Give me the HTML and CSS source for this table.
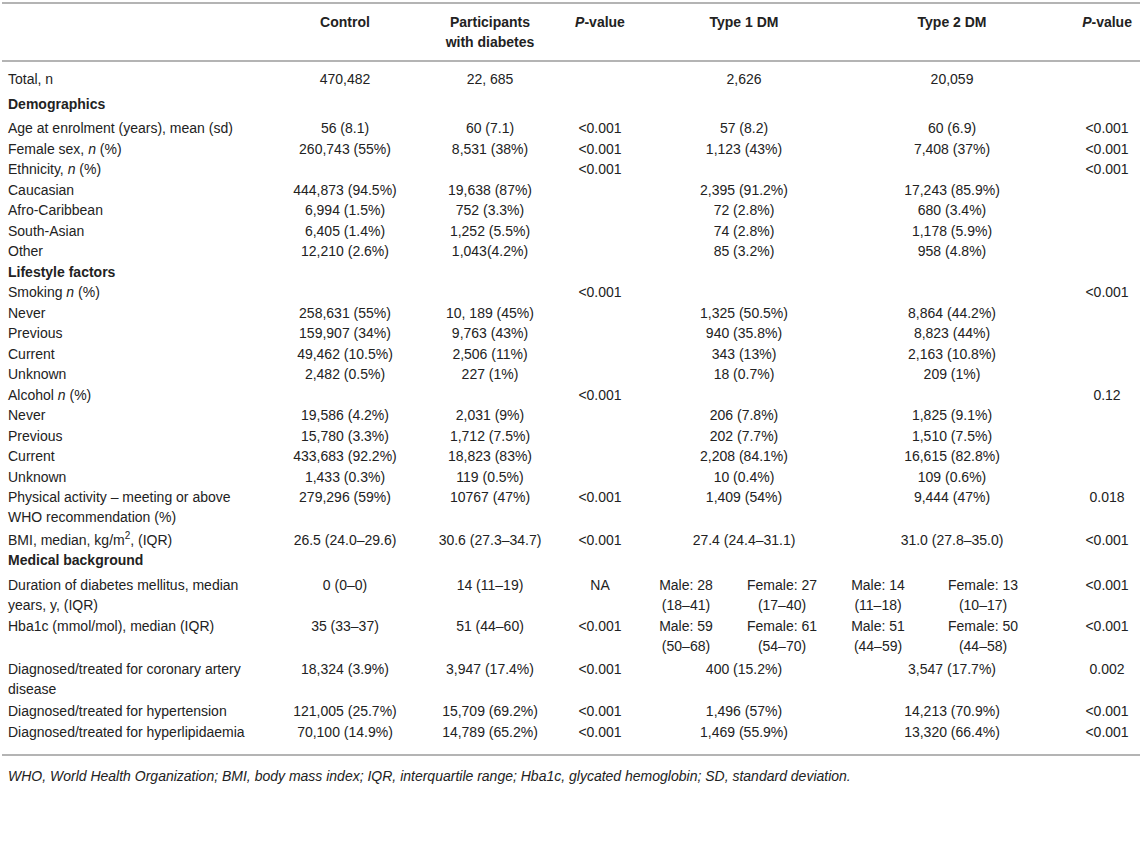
FILE: index.html
```html
<!DOCTYPE html>
<html>
<head>
<meta charset="utf-8">
<link rel="stylesheet" href="styles.css">
</head>
<body>
<div class="wrap">
<table class="tbl">
<colgroup>
<col class="c-label"><col class="c-ctrl"><col class="c-part"><col class="c-p"><col class="c-t1a"><col class="c-t1b"><col class="c-t2a"><col class="c-t2b"><col class="c-p2">
</colgroup>
<thead>
<tr>
<th class="lab"></th>
<th>Control</th>
<th>Participants<br>with diabetes</th>
<th><i>P</i>-value</th>
<th colspan="2" class="t1">Type 1 DM</th>
<th colspan="2" class="t2">Type 2 DM</th>
<th class="p2"><i>P</i>-value</th>
</tr>
</thead>
<tbody>
<tr class="first"><td class="lab">Total, n</td><td>470,482</td><td>22, 685</td><td></td><td colspan="2" class="t1">2,626</td><td colspan="2" class="t2">20,059</td><td class="p2"></td></tr>
<tr class="demo"><td class="lab sec" colspan="9">Demographics</td></tr>
<tr><td class="lab">Age at enrolment (years), mean (sd)</td><td>56 (8.1)</td><td>60 (7.1)</td><td>&lt;0.001</td><td colspan="2" class="t1">57 (8.2)</td><td colspan="2" class="t2">60 (6.9)</td><td class="p2">&lt;0.001</td></tr>
<tr><td class="lab">Female sex, <i>n</i> (%)</td><td>260,743 (55%)</td><td>8,531 (38%)</td><td>&lt;0.001</td><td colspan="2" class="t1">1,123 (43%)</td><td colspan="2" class="t2">7,408 (37%)</td><td class="p2">&lt;0.001</td></tr>
<tr><td class="lab">Ethnicity, <i>n</i> (%)</td><td></td><td></td><td>&lt;0.001</td><td colspan="2" class="t1"></td><td colspan="2" class="t2"></td><td class="p2">&lt;0.001</td></tr>
<tr><td class="lab">Caucasian</td><td>444,873 (94.5%)</td><td>19,638 (87%)</td><td></td><td colspan="2" class="t1">2,395 (91.2%)</td><td colspan="2" class="t2">17,243 (85.9%)</td><td class="p2"></td></tr>
<tr><td class="lab">Afro-Caribbean</td><td>6,994 (1.5%)</td><td>752 (3.3%)</td><td></td><td colspan="2" class="t1">72 (2.8%)</td><td colspan="2" class="t2">680 (3.4%)</td><td class="p2"></td></tr>
<tr><td class="lab">South-Asian</td><td>6,405 (1.4%)</td><td>1,252 (5.5%)</td><td></td><td colspan="2" class="t1">74 (2.8%)</td><td colspan="2" class="t2">1,178 (5.9%)</td><td class="p2"></td></tr>
<tr><td class="lab">Other</td><td>12,210 (2.6%)</td><td>1,043(4.2%)</td><td></td><td colspan="2" class="t1">85 (3.2%)</td><td colspan="2" class="t2">958 (4.8%)</td><td class="p2"></td></tr>
<tr><td class="lab sec" colspan="9">Lifestyle factors</td></tr>
<tr><td class="lab">Smoking <i>n</i> (%)</td><td></td><td></td><td>&lt;0.001</td><td colspan="2" class="t1"></td><td colspan="2" class="t2"></td><td class="p2">&lt;0.001</td></tr>
<tr><td class="lab">Never</td><td>258,631 (55%)</td><td>10, 189 (45%)</td><td></td><td colspan="2" class="t1">1,325 (50.5%)</td><td colspan="2" class="t2">8,864 (44.2%)</td><td class="p2"></td></tr>
<tr><td class="lab">Previous</td><td>159,907 (34%)</td><td>9,763 (43%)</td><td></td><td colspan="2" class="t1">940 (35.8%)</td><td colspan="2" class="t2">8,823 (44%)</td><td class="p2"></td></tr>
<tr><td class="lab">Current</td><td>49,462 (10.5%)</td><td>2,506 (11%)</td><td></td><td colspan="2" class="t1">343 (13%)</td><td colspan="2" class="t2">2,163 (10.8%)</td><td class="p2"></td></tr>
<tr><td class="lab">Unknown</td><td>2,482 (0.5%)</td><td>227 (1%)</td><td></td><td colspan="2" class="t1">18 (0.7%)</td><td colspan="2" class="t2">209 (1%)</td><td class="p2"></td></tr>
<tr><td class="lab">Alcohol <i>n</i> (%)</td><td></td><td></td><td>&lt;0.001</td><td colspan="2" class="t1"></td><td colspan="2" class="t2"></td><td class="p2">0.12</td></tr>
<tr><td class="lab">Never</td><td>19,586 (4.2%)</td><td>2,031 (9%)</td><td></td><td colspan="2" class="t1">206 (7.8%)</td><td colspan="2" class="t2">1,825 (9.1%)</td><td class="p2"></td></tr>
<tr><td class="lab">Previous</td><td>15,780 (3.3%)</td><td>1,712 (7.5%)</td><td></td><td colspan="2" class="t1">202 (7.7%)</td><td colspan="2" class="t2">1,510 (7.5%)</td><td class="p2"></td></tr>
<tr><td class="lab">Current</td><td>433,683 (92.2%)</td><td>18,823 (83%)</td><td></td><td colspan="2" class="t1">2,208 (84.1%)</td><td colspan="2" class="t2">16,615 (82.8%)</td><td class="p2"></td></tr>
<tr><td class="lab">Unknown</td><td>1,433 (0.3%)</td><td>119 (0.5%)</td><td></td><td colspan="2" class="t1">10 (0.4%)</td><td colspan="2" class="t2">109 (0.6%)</td><td class="p2"></td></tr>
<tr class="two"><td class="lab">Physical activity – meeting or above WHO recommendation (%)</td><td>279,296 (59%)</td><td>10767 (47%)</td><td>&lt;0.001</td><td colspan="2" class="t1">1,409 (54%)</td><td colspan="2" class="t2">9,444 (47%)</td><td class="p2">0.018</td></tr>
<tr><td class="lab">BMI, median, kg/m<sup>2</sup>, (IQR)</td><td>26.5 (24.0–29.6)</td><td>30.6 (27.3–34.7)</td><td>&lt;0.001</td><td colspan="2" class="t1">27.4 (24.4–31.1)</td><td colspan="2" class="t2">31.0 (27.8–35.0)</td><td class="p2">&lt;0.001</td></tr>
<tr class="medsec"><td class="lab sec" colspan="9">Medical background</td></tr>
<tr class="dur"><td class="lab">Duration of diabetes mellitus, median years, y, (IQR)</td><td>0 (0–0)</td><td>14 (11–19)</td><td>NA</td><td>Male: 28<br>(18–41)</td><td>Female: 27<br>(17–40)</td><td>Male: 14<br>(11–18)</td><td>Female: 13<br>(10–17)</td><td class="p2">&lt;0.001</td></tr>
<tr class="two"><td class="lab">Hba1c (mmol/mol), median (IQR)</td><td>35 (33–37)</td><td>51 (44–60)</td><td>&lt;0.001</td><td>Male: 59<br>(50–68)</td><td>Female: 61<br>(54–70)</td><td>Male: 51<br>(44–59)</td><td>Female: 50<br>(44–58)</td><td class="p2">&lt;0.001</td></tr>
<tr class="two"><td class="lab">Diagnosed/treated for coronary artery disease</td><td>18,324 (3.9%)</td><td>3,947 (17.4%)</td><td>&lt;0.001</td><td colspan="2" class="t1">400 (15.2%)</td><td colspan="2" class="t2">3,547 (17.7%)</td><td class="p2">0.002</td></tr>
<tr><td class="lab">Diagnosed/treated for hypertension</td><td>121,005 (25.7%)</td><td>15,709 (69.2%)</td><td>&lt;0.001</td><td colspan="2" class="t1">1,496 (57%)</td><td colspan="2" class="t2">14,213 (70.9%)</td><td class="p2">&lt;0.001</td></tr>
<tr class="last"><td class="lab">Diagnosed/treated for hyperlipidaemia</td><td>70,100 (14.9%)</td><td>14,789 (65.2%)</td><td>&lt;0.001</td><td colspan="2" class="t1">1,469 (55.9%)</td><td colspan="2" class="t2">13,320 (66.4%)</td><td class="p2">&lt;0.001</td></tr>
</tbody>
</table>
<p class="note">WHO, World Health Organization; BMI, body mass index; IQR, interquartile range; Hba1c, glycated hemoglobin; SD, standard deviation.</p>
</div>
</body>
</html>
```
FILE: styles.css
```css
html, body {
  margin: 0;
  padding: 0;
  background: #ffffff;
}
body {
  font-family: "Liberation Sans", Arial, sans-serif;
  color: #222222;
  font-size: 14px;
}
.wrap {
  padding: 2px 3px 0 2px;
}
.tbl {
  width: 1138px;
  border-collapse: collapse;
  table-layout: fixed;
  border-top: 2px solid #b4b4b4;
  border-bottom: 2px solid #b4b4b4;
}
.c-label { width: 278px; }
.c-ctrl { width: 130px; }
.c-part { width: 160px; }
.c-p { width: 60px; }
.c-t1a { width: 112px; }
.c-t1b { width: 80px; }
.c-t2a { width: 112px; }
.c-t2b { width: 98px; }
.c-p2 { width: 108px; }
th {
  font-weight: bold;
  text-align: center;
  vertical-align: top;
  line-height: 20px;
  padding: 8px 0 8px 0;
  border-bottom: 2px solid #b4b4b4;
}
td {
  text-align: center;
  vertical-align: top;
  line-height: 20px;
  padding: 0.25px 0;
  white-space: nowrap;
}
td.lab, th.lab {
  text-align: left;
  padding-left: 6px;
  padding-right: 26px;
  white-space: normal;
}
td.sec {
  font-weight: bold;
}
.t1 {
  padding-left: 36px;
}
.t2 {
  padding-left: 50px;
}
.p2 {
  padding-left: 42px;
}
th.t1 { padding-left: 36px; }
th.t2 { padding-left: 50px; }
th.p2 { padding-left: 42px; }
tr.first td {
  padding-top: 7px;
  padding-bottom: 4.25px;
}
tr.demo td {
  padding-bottom: 4.25px;
}
tr.two td {
  padding-bottom: 2.5px;
}
tr.medsec td {
  padding-bottom: 4px;
}
tr.dur td {
  padding-bottom: 1px;
}
tr.last td {
  padding-bottom: 12px;
}
sup {
  font-size: 10px;
  line-height: 0;
}
.note {
  margin: 11px 0 0 6px;
  font-style: italic;
  font-size: 14px;
  line-height: 18px;
}
```
